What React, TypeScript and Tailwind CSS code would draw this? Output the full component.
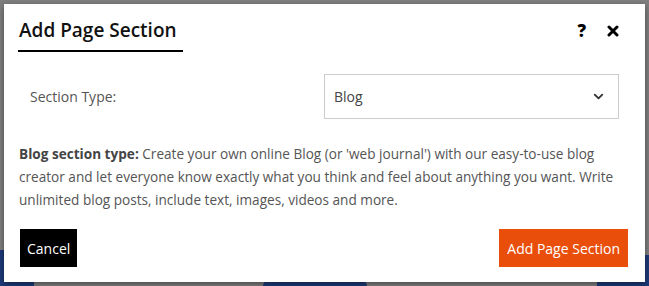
import { ChevronDown } from 'lucide-react';

export default function App() {
  return (
    <div
      className="relative w-[649px] h-[286px] overflow-hidden bg-[#7f7f7f]"
      style={{ fontFamily: '"Open Sans", Lato, sans-serif' }}
    >
      {/* darkened page behind the overlay */}
      <div className="absolute left-0 top-[250px] w-[34px] h-[40px] rounded-tr-[6px] bg-[#1d3a78]" />
      <div className="absolute left-[263px] top-[280px] w-[104px] h-[20px] rounded-t-[6px] bg-[#1d3a78]" />
      <div className="absolute left-[597px] top-[255px] w-[60px] h-[40px] rounded-tl-[6px] bg-[#1d3a78]" />

      <div className="relative ml-[4px] mt-[4px] w-[641px] h-[278px] bg-white shadow-[0_2px_6px_rgba(0,0,0,0.45)] flex flex-col">
        {/* header */}
        <div className="flex items-start justify-between pl-[14px] pr-[26px] pt-[13px]">
          <div className="pb-[7px] border-b-2 border-black pr-[6px]">
            <h2 className="text-[19px] leading-[26px] font-semibold text-[#111] pl-[1px]">Add Page Section</h2>
          </div>
          <div className="flex items-center gap-[21px] pt-[5px] text-black">
            <span className="text-[17px] font-black leading-none">?</span>
            <svg width="12" height="12" viewBox="0 0 12 12">
              <path d="M2 2 L10 10 M10 2 L2 10" stroke="black" strokeWidth="3" strokeLinecap="round" />
            </svg>
          </div>
        </div>

        {/* section type */}
        <div className="flex items-center mt-[22px] pl-[26px] pr-[26px]">
          <label className="w-[294px] text-[14px] text-[#555]">Section Type:</label>
          <div className="w-[295px] h-[45px] border border-[#cccccc] flex items-center justify-between pl-[9px] pr-[12px]">
            <span className="text-[14px] text-[#444]">Blog</span>
            <ChevronDown className="w-[15px] h-[15px] text-[#333]" strokeWidth={3} />
          </div>
        </div>

        {/* description */}
        <p className="mt-[23px] pl-[15px] pr-[14px] text-[13.6px] leading-[23px] text-[#555]">
          <b className="font-bold text-[#444]">Blog section type:</b> Create your own online Blog (or 'web journal') with our easy-to-use blog creator and let everyone know exactly what you think and feel about anything you want. Write unlimited blog posts, include text, images, videos and more.
        </p>

        {/* footer */}
        <div className="flex items-center justify-between mt-[18px] pl-[16px] pr-[17px]">
          <button className="h-[38px] px-[7px] bg-black text-white text-[14px]">Cancel</button>
          <button className="h-[38px] px-[8px] bg-[#e94e0b] text-white text-[14px]">Add Page Section</button>
        </div>
      </div>
    </div>
  );
}
